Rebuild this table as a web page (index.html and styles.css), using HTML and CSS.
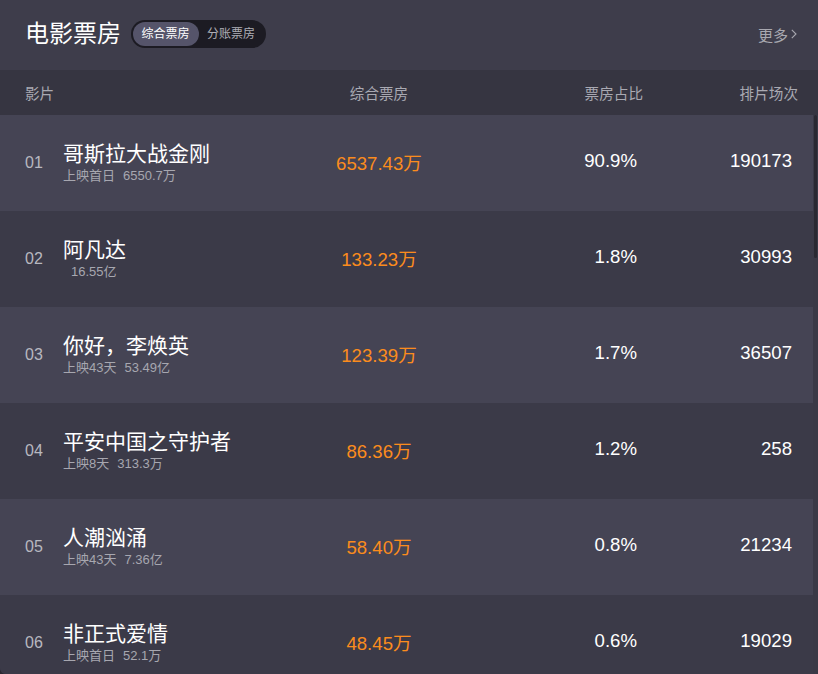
FILE: index.html
```html
<!DOCTYPE html>
<html lang="zh-CN">
<head>
<meta charset="utf-8">
<title>电影票房</title>
<link rel="stylesheet" href="styles.css">
</head>
<body>
<div class="page">
  <header class="top">
    <h1 class="title">电影票房</h1>
    <div class="toggle">
      <span class="seg active">综合票房</span>
      <span class="seg">分账票房</span>
    </div>
    <a class="more">更多<svg class="chev" width="6" height="10" viewBox="0 0 6 10"><polyline points="0.8,0.8 5,5 0.8,9.2" fill="none" stroke="#a8a8b0" stroke-width="1.1"/></svg></a>
  </header>
  <div class="thead">
    <div class="th th-film">影片</div>
    <div class="th th-box">综合票房</div>
    <div class="th th-num">票房占比</div>
    <div class="th th-num">排片场次</div>
  </div>
  <div class="tbody">
    <div class="list">
      <div class="row">
        <div class="rank">01</div>
        <div class="film">
          <div class="name">哥斯拉大战金刚</div>
          <div class="sub"><span>上映首日</span><span class="sum">6550.7万</span></div>
        </div>
        <div class="box">6537.43万</div>
        <div class="num">90.9%</div>
        <div class="num">190173</div>
      </div>
      <div class="row">
        <div class="rank">02</div>
        <div class="film">
          <div class="name">阿凡达</div>
          <div class="sub"><span></span><span class="sum">16.55亿</span></div>
        </div>
        <div class="box">133.23万</div>
        <div class="num">1.8%</div>
        <div class="num">30993</div>
      </div>
      <div class="row">
        <div class="rank">03</div>
        <div class="film">
          <div class="name">你好，李焕英</div>
          <div class="sub"><span>上映43天</span><span class="sum">53.49亿</span></div>
        </div>
        <div class="box">123.39万</div>
        <div class="num">1.7%</div>
        <div class="num">36507</div>
      </div>
      <div class="row">
        <div class="rank">04</div>
        <div class="film">
          <div class="name">平安中国之守护者</div>
          <div class="sub"><span>上映8天</span><span class="sum">313.3万</span></div>
        </div>
        <div class="box">86.36万</div>
        <div class="num">1.2%</div>
        <div class="num">258</div>
      </div>
      <div class="row">
        <div class="rank">05</div>
        <div class="film">
          <div class="name">人潮汹涌</div>
          <div class="sub"><span>上映43天</span><span class="sum">7.36亿</span></div>
        </div>
        <div class="box">58.40万</div>
        <div class="num">0.8%</div>
        <div class="num">21234</div>
      </div>
      <div class="row">
        <div class="rank">06</div>
        <div class="film">
          <div class="name">非正式爱情</div>
          <div class="sub"><span>上映首日</span><span class="sum">52.1万</span></div>
        </div>
        <div class="box">48.45万</div>
        <div class="num">0.6%</div>
        <div class="num">19029</div>
      </div>
    </div>
    <div class="scrollbar"><div class="thumb"></div></div>
  </div>
</div>
</body>
</html>
```

FILE: styles.css
```css
html, body {
  margin: 0;
  padding: 0;
  height: 100%;
  overflow: hidden;
}
body {
  background: #2a2932;
  font-family: "Liberation Sans", "Noto Sans CJK SC", sans-serif;
  color: #ffffff;
}
.page {
  height: 674px;
  overflow: hidden;
  background: #3c3b49;
  border-bottom-left-radius: 6px;
  display: flex;
  flex-direction: column;
}
.top {
  height: 70px;
  box-sizing: border-box;
  padding: 0 21px 2px 25px;
  display: flex;
  align-items: center;
  background: #3e3d4b;
  flex: none;
}
.title {
  margin: 0;
  font-size: 24px;
  font-weight: normal;
  line-height: 28px;
  color: #ffffff;
}
.toggle {
  margin-left: 10px;
  display: flex;
  align-items: center;
  height: 28px;
  box-sizing: border-box;
  padding: 2px;
  border-radius: 14px;
  background: #1c1b23;
}
.seg {
  height: 24px;
  line-height: 24px;
  padding: 0 9px 0 8.5px;
  font-size: 12px;
  color: #aeaeb6;
  border-radius: 12px;
}
.seg.active {
  background: #55546a;
  color: #ffffff;
}
.more {
  margin-left: auto;
  display: flex;
  align-items: center;
  font-size: 15px;
  color: #a8a8b0;
  cursor: pointer;
}
.chev {
  margin-left: 3px;
}
.thead {
  height: 45px;
  flex: none;
  background: #363541;
  display: grid;
  grid-template-columns: 38px 251px 130px 1fr 155px;
  align-items: center;
  padding: 0 20px 0 25px;
  font-size: 14.6px;
  color: #a9a9b2;
}
.th-film {
  grid-column: 1 / 3;
}
.th-box {
  text-align: center;
}
.th-num {
  text-align: right;
}
.tbody {
  flex: 1;
  display: flex;
  min-height: 0;
}
.list {
  flex: 1;
  min-width: 0;
}
.row {
  height: 96px;
  display: grid;
  grid-template-columns: 38px 251px 130px 1fr 155px;
  align-items: center;
  padding: 0 21px 0 25px;
  background: #3b3a48;
}
.row:nth-child(odd) {
  background: #454454;
}
.rank {
  font-size: 16px;
  color: #b8b8c0;
  padding-bottom: 1px;
}
.film {
  display: flex;
  flex-direction: column;
  padding-top: 1px;
}
.name {
  font-size: 21px;
  line-height: 24px;
  color: #ffffff;
  white-space: nowrap;
}
.sub {
  font-size: 13px;
  line-height: 20px;
  color: #a7a7b0;
  white-space: nowrap;
}
.sum {
  margin-left: 8px;
}
.box {
  text-align: center;
  font-size: 18.6px;
  color: #fb8c1d;
  padding-bottom: 4px;
}
.num {
  text-align: right;
  font-size: 18.6px;
  color: #ffffff;
  padding-bottom: 4px;
}
.scrollbar {
  width: 5px;
  flex: none;
  background: #3a3946;
  padding: 0 1px 0 1px;
  box-sizing: border-box;
}
.thumb {
  height: 143px;
  background: #2a2932;
  border-radius: 2px;
}
```
